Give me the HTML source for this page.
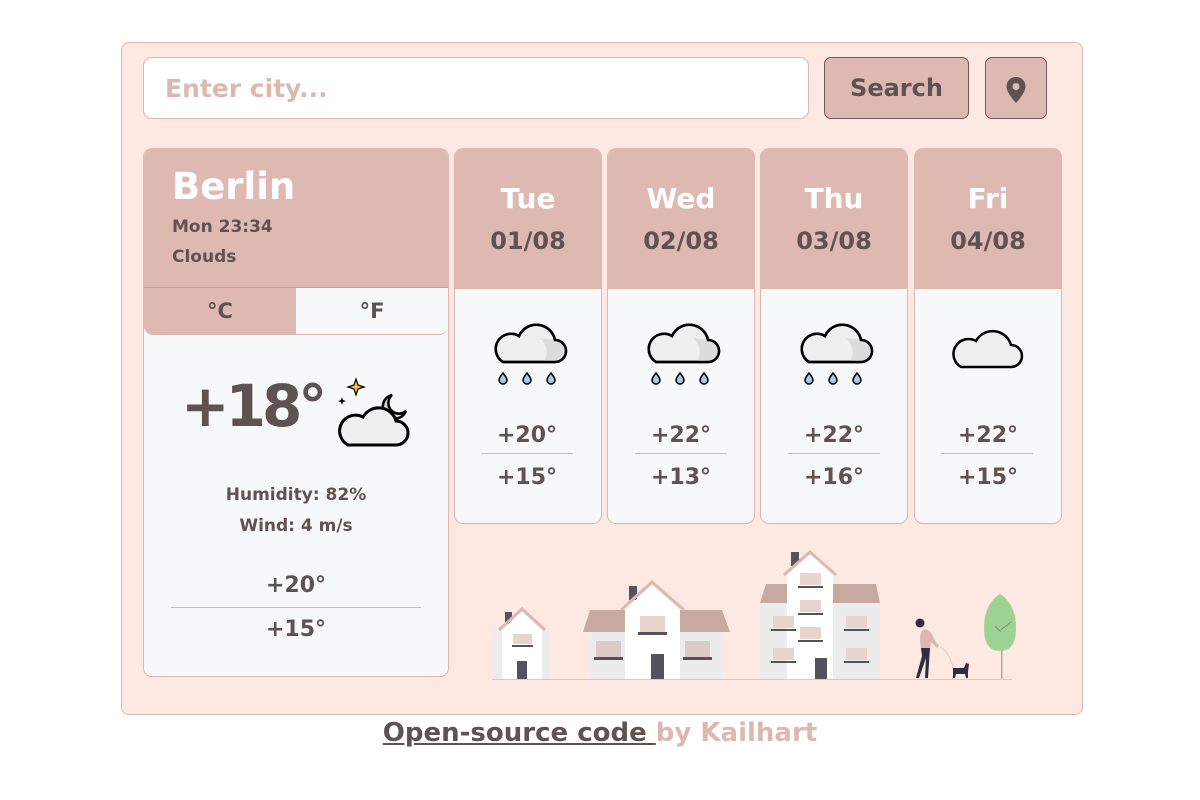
<!DOCTYPE html>
<html><head><meta charset="utf-8"><style>
*{box-sizing:border-box;margin:0;padding:0}
body{width:1200px;height:800px;background:#fff;font-family:"DejaVu Sans","Liberation Sans",sans-serif;font-weight:bold;color:#5e5350;position:relative;overflow:hidden}
.wrap{position:absolute;left:121px;top:42px;width:962px;height:673px;background:#fde8e2;border:1px solid #dcb8b0;border-radius:8px}
.abs{position:absolute}
.input{left:143px;top:57px;width:666px;height:62px;background:#fff;border:1px solid #dcb8b0;border-radius:9px;font-size:25px;color:#dcb8b0;padding:16px 0 0 21px}
.btn{top:57px;height:62px;background:#ddb9b1;border:1px solid #6b5a57;border-radius:7px;text-align:center}
.card{background:#f7f8fa;border:1px solid #dcb8b0;border-radius:9px;overflow:hidden}
.hd{background:#ddb9b1}
.fc .hd{height:140px;text-align:center}
.day{font-size:28px;color:#fff;padding-top:33px}
.date{font-size:24px;margin-top:12px}
.t{text-align:center;font-size:22px}
.ln{position:absolute;height:1px;background:#c9c0bc}
</style></head><body>
<div class="wrap"></div>
<div class="abs input">Enter city...</div>
<div class="abs btn" style="left:824px;width:145px;font-size:24px;padding-top:16px">Search</div>
<div class="abs btn" style="left:985px;width:62px;padding-top:18px">
<svg width="22" height="28" viewBox="0 0 22 28"><path d="M11 1C5.5 1 1.5 5 1.5 10.5 1.5 17 11 27 11 27S20.5 17 20.5 10.5C20.5 5 16.5 1 11 1Z" fill="#5e5350"/><circle cx="11" cy="10.5" r="3.5" fill="#ddb9b1"/></svg></div>

<div class="abs card" style="left:143px;top:148px;width:306px;height:529px">
 <div class="hd" style="height:138px;padding:14px 0 0 28px">
  <div style="font-size:37px;color:#fff;line-height:48px">Berlin</div>
  <div style="font-size:17px;margin-top:6px">Mon 23:34</div>
  <div style="font-size:17px;margin-top:10px">Clouds</div>
 </div>
 <div style="display:flex;height:48px;border-top:1px solid #c0a39c;border-bottom:1px solid #dcb8b0;border-radius:0 0 9px 9px;overflow:hidden">
  <div style="flex:1;background:#ddb9b1;text-align:center;font-size:21px;padding-top:11px">°C</div>
  <div style="flex:1;background:#f7f8fa;text-align:center;font-size:21px;padding-top:11px">°F</div>
 </div>
 <div class="abs" style="left:37px;top:223px;font-size:58px;letter-spacing:-4px">+18°</div>
 <svg class="abs" style="left:190px;top:226px" width="80" height="76" viewBox="0 0 80 76">
  <path d="M22 4l2 6 6 2-6 2-2 6-2-6-6-2 6-2z" fill="#f4c430" stroke="#000" stroke-width="1.2"/>
  <path d="M8 22l1 3 3 1-3 1-1 3-1-3-3-1 3-1z" fill="#000"/>
  <path d="M58 20a12 12 0 1 0 14 16a10 10 0 0 1-14-16z" fill="#cfd6cb" stroke="#000" stroke-width="2.5"/>
  <path d="M14 70h48a12 12 0 0 0 0-24a18 18 0 0 0-33-4a13 13 0 0 0-15 28z" fill="#efefef" stroke="#000" stroke-width="3"/>
 </svg>
 <div class="abs" style="left:0;width:100%;top:331px;text-align:center;font-size:17px;line-height:31px">Humidity: 82%<br>Wind: 4 m/s</div>
 <div class="abs t" style="left:0;width:100%;top:424px">+20°</div>
 <div class="ln" style="left:27px;width:250px;top:458px"></div>
 <div class="abs t" style="left:0;width:100%;top:468px">+15°</div>
</div>

<div class="abs card fc" style="left:454px;top:148px;width:148px;height:376px"><div class="hd"><div class="day">Tue</div><div class="date">01/08</div></div></div>
<div class="abs card fc" style="left:607px;top:148px;width:148px;height:376px"><div class="hd"><div class="day">Wed</div><div class="date">02/08</div></div></div>
<div class="abs card fc" style="left:760px;top:148px;width:148px;height:376px"><div class="hd"><div class="day">Thu</div><div class="date">03/08</div></div></div>
<div class="abs card fc" style="left:914px;top:148px;width:148px;height:376px"><div class="hd"><div class="day">Fri</div><div class="date">04/08</div></div></div>

<svg class="abs" style="left:0;top:0" width="1200" height="800">
 <g id="rc">
 <path d="M503 362h52a11 11 0 0 0 0-22a19 19 0 0 0-36-4a13 13 0 0 0-16 26z" fill="#efefef" stroke="#000" stroke-width="2.5"/>
 <path d="M540 338a19 19 0 0 1 4 24h11a11 11 0 0 0 0-22z" fill="#dcdcdc"/>
 <path d="M503 362h52a11 11 0 0 0 0-22a19 19 0 0 0-36-4a13 13 0 0 0-16 26z" fill="none" stroke="#000" stroke-width="2.5"/>
 <g fill="#a9c8e8" stroke="#000" stroke-width="1.5">
  <path d="M503 373q4 5 4 7a4 4 0 0 1-8 0q0-2 4-7z"/><path d="M527 373q4 5 4 7a4 4 0 0 1-8 0q0-2 4-7z"/><path d="M551 373q4 5 4 7a4 4 0 0 1-8 0q0-2 4-7z"/>
 </g></g>
 <use href="#rc" x="153"/><use href="#rc" x="306"/>
 <path d="M961 367h50a11 11 0 0 0 0-22a19 19 0 0 0-35-4a13 13 0 0 0-15 26z" fill="#efefef" stroke="#000" stroke-width="2.5"/>
 <g font-family="DejaVu Sans" font-weight="bold" font-size="22" fill="#5e5350" text-anchor="middle">
  <text x="527" y="442">+20°</text><text x="527" y="484">+15°</text>
  <text x="681" y="442">+22°</text><text x="681" y="484">+13°</text>
  <text x="834" y="442">+22°</text><text x="834" y="484">+16°</text>
  <text x="988" y="442">+22°</text><text x="988" y="484">+15°</text>
 </g>
 <g fill="#c9c0bc"><rect x="481" y="453" width="92" height="1"/><rect x="635" y="453" width="92" height="1"/><rect x="788" y="453" width="92" height="1"/><rect x="941" y="453" width="92" height="1"/></g>

 <rect x="492" y="679" width="520" height="1" fill="#dcc8c3"/>
 <rect x="494" y="628" width="56" height="51" fill="#ececec"/>
 <rect x="505" y="612" width="7" height="12" fill="#53525e"/>
 <path d="M502 630L522 611L542 630V679H502Z" fill="#fff"/>
 <path d="M499 630L522 609L545 630" fill="none" stroke="#dcb8b0" stroke-width="3"/>
 <rect x="513" y="634" width="19" height="10" fill="#e8d4cf"/><rect x="512" y="645" width="21" height="2" fill="#53525e"/>
 <rect x="517" y="661" width="10" height="18" fill="#53525e"/>

 <rect x="590" y="632" width="132" height="47" fill="#ececec"/>
 <path d="M590 610H722L730 632H583Z" fill="#c6a9a0"/>
 <rect x="629" y="586" width="8" height="14" fill="#53525e"/>
 <path d="M625 610L652 585L680 610V679H625Z" fill="#fff"/>
 <path d="M621 610L652 582L684 610" fill="none" stroke="#dcb8b0" stroke-width="3"/>
 <rect x="640" y="616" width="25" height="16" fill="#e8d4cf"/><rect x="638" y="632" width="29" height="3" fill="#53525e"/>
 <rect x="596" y="641" width="25" height="16" fill="#dccac6"/><rect x="594" y="657" width="29" height="3" fill="#53525e"/>
 <rect x="685" y="641" width="25" height="16" fill="#dccac6"/><rect x="683" y="657" width="29" height="3" fill="#53525e"/>
 <rect x="651" y="654" width="13" height="25" fill="#53525e"/>

 <rect x="760" y="603" width="120" height="76" fill="#ececec"/>
 <path d="M766 584H876L880 603H760Z" fill="#c6a9a0"/>
 <rect x="791" y="552" width="8" height="14" fill="#53525e"/>
 <path d="M787 573L810 553L833 573V679H787Z" fill="#fff"/>
 <path d="M784 575L810 552L836 575" fill="none" stroke="#dcb8b0" stroke-width="3"/>
 <g fill="#e8d4cf"><rect x="800" y="573" width="21" height="12"/><rect x="800" y="600" width="21" height="12"/><rect x="800" y="627" width="21" height="12"/><rect x="773" y="616" width="21" height="12"/><rect x="773" y="648" width="21" height="12"/><rect x="846" y="616" width="21" height="12"/><rect x="846" y="648" width="21" height="12"/></g>
 <g fill="#53525e"><rect x="798" y="586" width="25" height="2"/><rect x="798" y="613" width="25" height="2"/><rect x="798" y="640" width="25" height="2"/><rect x="771" y="629" width="25" height="2"/><rect x="771" y="661" width="25" height="2"/><rect x="844" y="629" width="25" height="2"/><rect x="844" y="661" width="25" height="2"/><rect x="815" y="658" width="12" height="21"/></g>

 <circle cx="920" cy="623" r="4.5" fill="#2f2e41"/>
 <path d="M925 629q7 2 9 10l5 7-2 2-6-6-1 10h-9l-1-12q0-10 5-11z" fill="#dcb8b0"/>
 <path d="M921 648h9l-2 30h-3l1-20-7 20h-3l6-22z" fill="#2f2e41"/>
 <path d="M940 647q8 3 13 20" fill="none" stroke="#ccc" stroke-width="0.8"/>
 <path d="M953 668h11l2-5 3 1-1 8v6h-2l-1-4h-9l-1 4h-2z" fill="#2f2e41"/>
 <rect x="1001" y="610" width="1.5" height="69" fill="#aaa"/>
 <path d="M1000 594q16 10 16 34q0 23-16 23q-16 0-16-23q0-24 16-34z" fill="#9cd393"/>
 <path d="M1001 632l-6-6M1001 630l10-8" stroke="#888" stroke-width="1"/>
</svg>

<div class="abs" style="left:0;width:1200px;top:718px;text-align:center;font-size:26px"><span style="text-decoration:underline;color:#5e5350">Open-source code </span><span style="color:#dcb8b0">by Kailhart</span></div>
</body></html>
